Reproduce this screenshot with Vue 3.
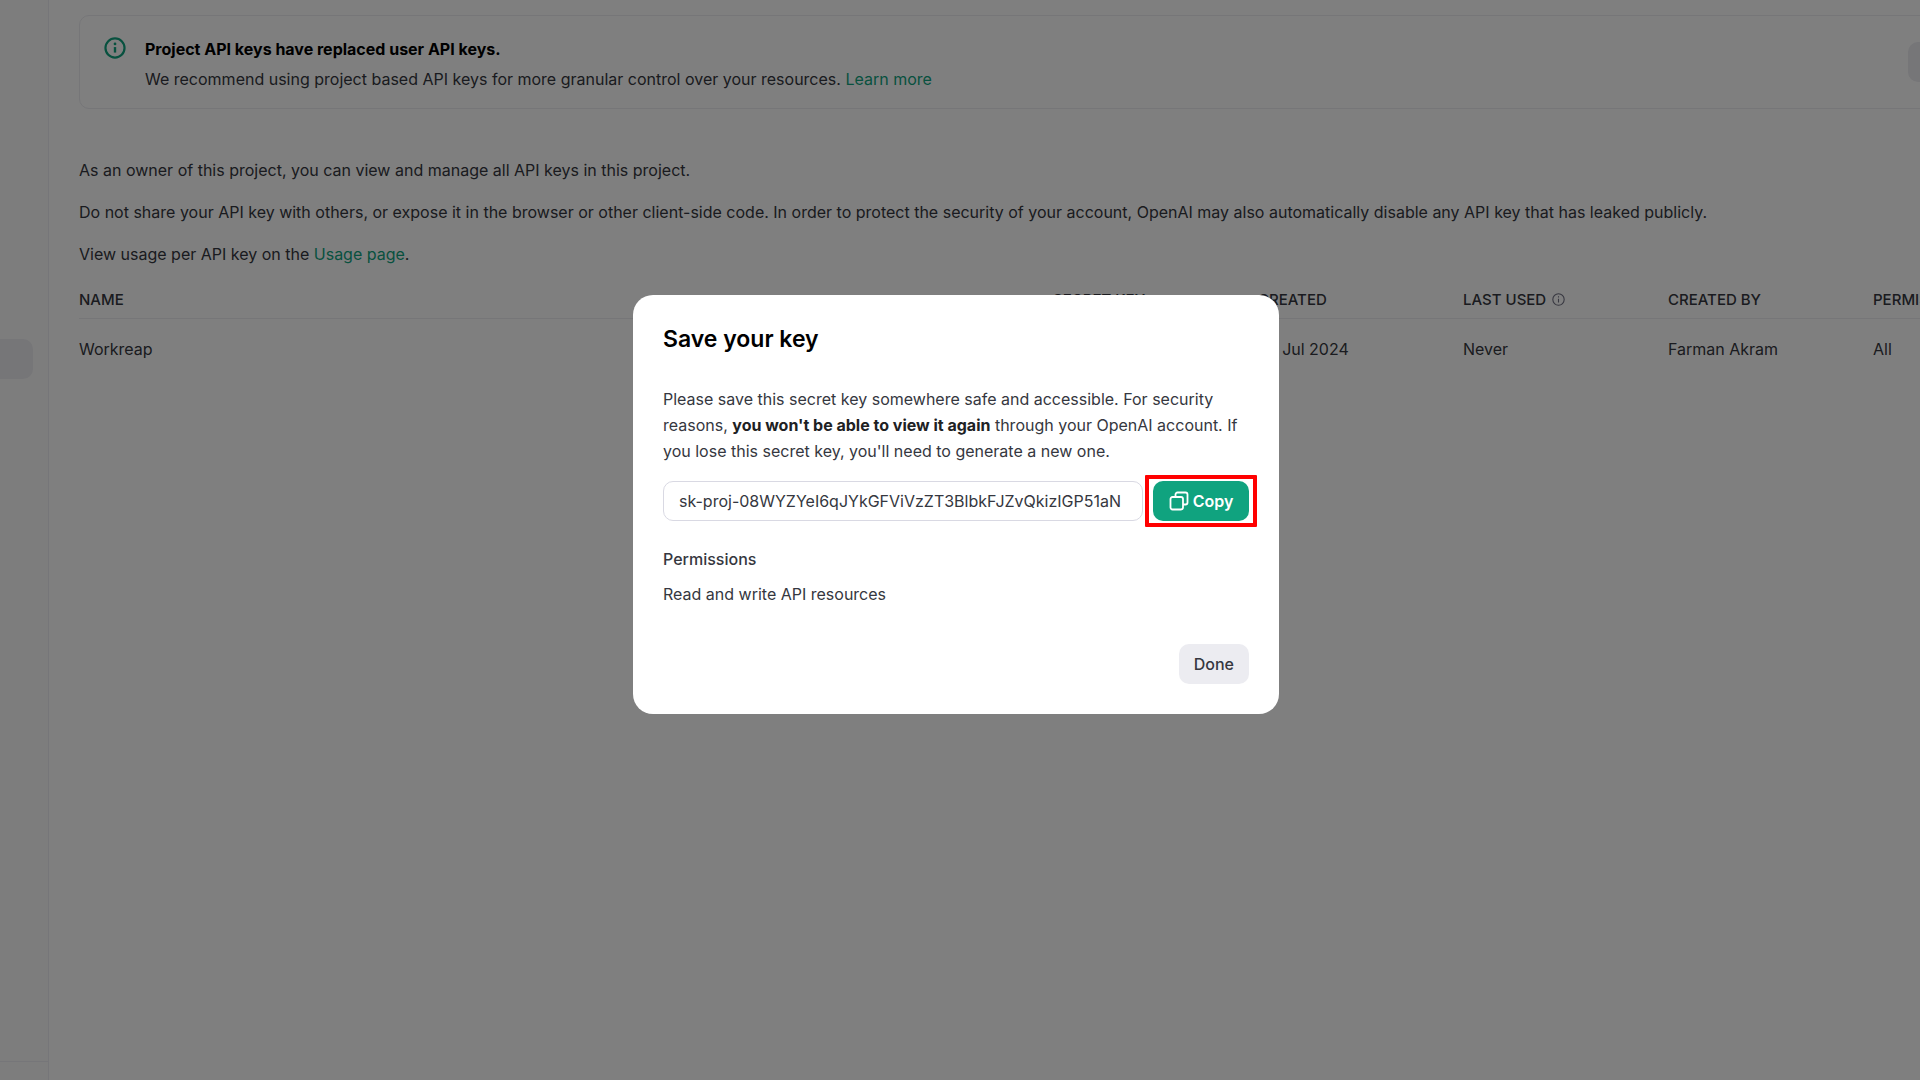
<template>
  <div class="page">
    <aside class="sidebar">
      <div class="nav-item"></div>
      <div class="sidebar-footer"></div>
    </aside>

    <main class="content">
      <section class="banner">
        <svg class="banner-icon" viewBox="0 0 24 24" fill="none" stroke="currentColor" stroke-width="2.4">
          <circle cx="12" cy="12" r="10.4" />
          <path d="M12 11v6" stroke-width="2.6" />
          <circle cx="12" cy="7.6" r="1.5" fill="currentColor" stroke="none" />
        </svg>
        <div class="banner-text">
          <strong>Project API keys have replaced user API keys.</strong>
          <p>
            We recommend using project based API keys for more granular control over your resources.
            <a href="#">Learn more</a>
          </p>
        </div>
        <button class="banner-button" type="button" aria-label="View project API keys"></button>
      </section>

      <div class="intro">
        <p>As an owner of this project, you can view and manage all API keys in this project.</p>
        <p>
          Do not share your API key with others, or expose it in the browser or other client-side code. In order to
          protect the security of your account, OpenAI may also automatically disable any API key that has leaked publicly.
        </p>
        <p>View usage per API key on the <a href="#">Usage page</a>.</p>
      </div>

      <table class="keys">
        <thead>
          <tr>
            <th v-for="col in columns" :key="col" :class="{ name: col === 'Name' }">
              {{ col }}
              <svg v-if="col === 'Last used'" class="info" viewBox="0 0 24 24" fill="none" stroke="currentColor" stroke-width="2">
                <circle cx="12" cy="12" r="10.5" />
                <path d="M12 10.5v7M12 6v2.5" />
              </svg>
            </th>
          </tr>
        </thead>
        <tbody>
          <tr v-for="row in keys" :key="row.name">
            <td>{{ row.name }}</td>
            <td>{{ row.secret }}</td>
            <td>{{ row.created }}</td>
            <td>{{ row.lastUsed }}</td>
            <td>{{ row.createdBy }}</td>
            <td>{{ row.permissions }}</td>
          </tr>
        </tbody>
      </table>
    </main>

    <div v-if="isOpen" class="overlay">
      <div class="modal" role="dialog" aria-modal="true" aria-labelledby="modal-title">
        <h2 id="modal-title">Save your key</h2>
        <p class="message">
          Please save this secret key somewhere safe and accessible. For security reasons,
          <strong>you won't be able to view it again</strong> through your OpenAI account. If you lose this secret key,
          you'll need to generate a new one.
        </p>
        <div class="key-row">
          <input ref="keyInput" class="key-input" type="text" :value="secretKey" aria-label="Secret key" readonly>
          <button class="copy" type="button" @click="copyKey">
            <svg viewBox="0 0 20 20" fill="none" stroke="currentColor" stroke-width="1.8">
              <rect x="1.5" y="6" width="12.5" height="12.5" rx="2" />
              <path d="M6.5 6v-2.5a2 2 0 0 1 2-2h8a2 2 0 0 1 2 2v8a2 2 0 0 1-2 2h-2.5" />
            </svg>
            Copy
          </button>
        </div>
        <h3>Permissions</h3>
        <p>Read and write API resources</p>
        <div class="actions">
          <button class="done" type="button" @click="isOpen = false">Done</button>
        </div>
      </div>
    </div>
  </div>
</template>

<script setup>
import { ref } from 'vue'

const isOpen = ref(true);
const keyInput = ref(null);
const secretKey = 'sk-proj-08WYZYeI6qJYkGFViVzZT3BlbkFJZvQkizIGP51aN';

const columns = ['Name', 'Secret key', 'Created', 'Last used', 'Created by', 'Permissions'];
const keys = [
  {
    name: 'Workreap',
    secret: 'sk-...51aN',
    created: '23 Jul 2024',
    lastUsed: 'Never',
    createdBy: 'Farman Akram',
    permissions: 'All'
  }
];

const copyKey = () => {
  keyInput.value.select();
  document.execCommand('copy');
};
</script>

<style>
body {
  margin: 0;
  background: #fff;
}
</style>

<style scoped>
.page {
  display: flex;
  height: 100vh;
  overflow: hidden;
  font-family: Inter, "Liberation Sans", sans-serif;
  font-size: 16px;
  line-height: 26px;
  color: #353740;
}

p,
h2,
h3 {
  margin: 0;
}

a {
  color: #10a37f;
  text-decoration: none;
}

button {
  font: inherit;
  border: none;
  cursor: pointer;
}

.sidebar {
  display: flex;
  flex: none;
  flex-direction: column;
  justify-content: space-between;
  width: 48px;
  background: #fbfbfb;
  border-right: 1px solid #ededf2;
}

.nav-item {
  width: 33px;
  height: 40px;
  margin-top: 339px;
  border-radius: 0 10px 10px 0;
  background: #ececf1;
}

.sidebar-footer {
  height: 18px;
  border-top: 1px solid #ededf2;
}

/* the list is wider than the window and runs off its right edge */
.content {
  flex: 1;
  min-width: 0;
  margin-right: -158px;
  padding: 15px 0 0 30px;
}

.banner {
  display: flex;
  align-items: center;
  padding: 20px 24px 16px;
  border: 1px solid #ececf1;
  border-radius: 10px;
}

.banner-icon {
  align-self: flex-start;
  width: 22px;
  height: 22px;
  margin: 1px 19px 0 0;
  color: #10a37f;
}

.banner-text {
  flex: 1;
}

.banner-text strong {
  display: block;
  margin-bottom: 4px;
  color: #000;
}

.banner-button {
  width: 145px;
  height: 40px;
  margin-bottom: 4px;
  border-radius: 10px;
  background: #ececf1;
}

.intro {
  display: grid;
  gap: 16px;
  margin-top: 48px;
}

.keys {
  width: 100%;
  margin-top: 20px;
  table-layout: fixed;
  border-collapse: collapse;
}

.keys th {
  width: 205px;
  padding: 0 0 5px;
  border-bottom: 1px solid #ececf1;
  font-size: 15px;
  font-weight: 500;
  text-align: left;
  text-transform: uppercase;
}

.keys th.name {
  width: auto;
}

.keys td {
  padding: 17px 0;
}

.info {
  width: 13px;
  height: 13px;
  margin-left: 2px;
  vertical-align: -1px;
  color: #6e6e80;
}

.overlay {
  position: fixed;
  inset: 0;
  display: flex;
  align-items: flex-start;
  justify-content: center;
  padding: 295px 8px 0 0;
  background: rgba(0, 0, 0, 0.5);
}

.modal {
  box-sizing: border-box;
  width: 646px;
  padding: 30px;
  border-radius: 20px;
  background: #fff;
}

.modal h2 {
  margin-bottom: 33px;
  font-size: 23px;
  font-weight: 600;
  line-height: 28px;
  color: #000;
}

.message {
  margin-bottom: 17px;
}

.message strong {
  color: #202123;
}

.key-row {
  display: flex;
  gap: 10px;
}

.key-input {
  box-sizing: border-box;
  flex: 1;
  min-width: 0;
  height: 40px;
  padding: 0 15px;
  border: 1px solid #d9d9e3;
  border-radius: 10px;
  font: inherit;
  color: #353740;
}

.copy {
  position: relative;
  display: flex;
  align-items: center;
  justify-content: center;
  gap: 4px;
  width: 96px;
  padding: 0;
  border-radius: 10px;
  background: #10a37f;
  color: #fff;
  font-weight: 600;
}

.copy svg {
  width: 20px;
  height: 20px;
}

/* highlight frame around the copy button */
.copy::after {
  content: "";
  position: absolute;
  inset: -6px -8px;
  border: 4px solid #f00;
  border-radius: 1px;
}

.modal h3 {
  margin: 25px 0 9px;
  font-size: 16px;
  font-weight: 500;
}

.actions {
  display: flex;
  justify-content: flex-end;
  margin-top: 37px;
}

.done {
  height: 40px;
  padding: 0 15px;
  border-radius: 10px;
  background: #ececf1;
  color: #353740;
  font-weight: 500;
}
</style>
